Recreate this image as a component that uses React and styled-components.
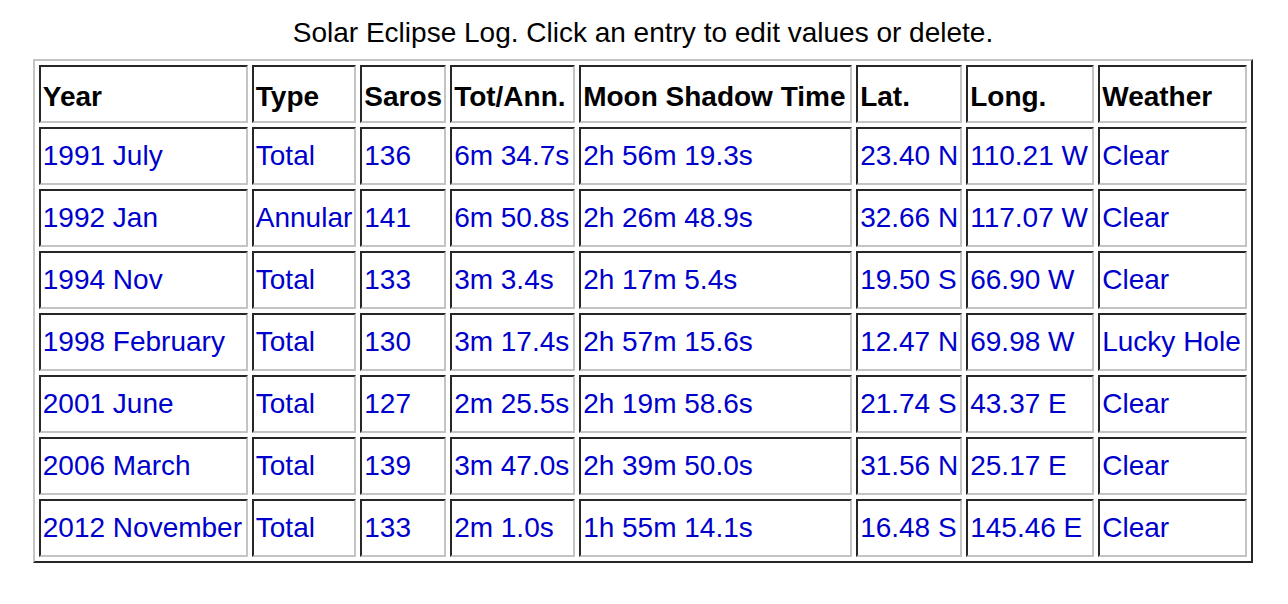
import React from "react";
import styled, { createGlobalStyle } from "styled-components";

const Global = createGlobalStyle`
  html, body { margin: 0; padding: 0; background: #ffffff; }
  body { font-family: "Liberation Sans", Arial, Helvetica, sans-serif; }
`;

const Page = styled.div`
  padding-top: 17px;
  display: flex;
  justify-content: center;
`;

const Table = styled.table`
  border-collapse: separate;
  border-spacing: 4px;
  table-layout: fixed;
  border-style: solid;
  border-width: 2px;
  border-color: #c4c4c4 #262626 #262626 #c4c4c4;
  font-size: 28px;
  line-height: 32px;
  margin-left: -2px;
`;

const Caption = styled.caption`
  font-size: 28px;
  line-height: 32px;
  color: #000;
  padding-bottom: 10px;
  text-align: center;
`;

const Cell = styled.td`
  box-sizing: border-box;
  height: 58px;
  padding: 0 2px;
  vertical-align: middle;
  text-align: left;
  white-space: nowrap;
  overflow: hidden;
  border-style: solid;
  border-width: 2px;
  border-color: #262626 #c4c4c4 #c4c4c4 #262626;
  color: #0000cc;
  cursor: pointer;
`;

const Head = styled(Cell).attrs({ as: "th" })`
  font-weight: bold;
  color: #000;
  cursor: default;
  padding-top: 5px;
  width: ${(p) => p.$w}px;
`;

const cols = [
  ["Year", 209],
  ["Type", 103],
  ["Saros", 85],
  ["Tot/Ann.", 125],
  ["Moon Shadow Time", 273],
  ["Lat.", 106],
  ["Long.", 128],
  ["Weather", 149],
];

const rows = [
  ["1991 July", "Total", "136", "6m 34.7s", "2h 56m 19.3s", "23.40 N", "110.21 W", "Clear"],
  ["1992 Jan", "Annular", "141", "6m 50.8s", "2h 26m 48.9s", "32.66 N", "117.07 W", "Clear"],
  ["1994 Nov", "Total", "133", "3m 3.4s", "2h 17m 5.4s", "19.50 S", "66.90 W", "Clear"],
  ["1998 February", "Total", "130", "3m 17.4s", "2h 57m 15.6s", "12.47 N", "69.98 W", "Lucky Hole"],
  ["2001 June", "Total", "127", "2m 25.5s", "2h 19m 58.6s", "21.74 S", "43.37 E", "Clear"],
  ["2006 March", "Total", "139", "3m 47.0s", "2h 39m 50.0s", "31.56 N", "25.17 E", "Clear"],
  ["2012 November", "Total", "133", "2m 1.0s", "1h 55m 14.1s", "16.48 S", "145.46 E", "Clear"],
];

export default function App() {
  return (
    <>
      <Global />
      <Page>
        <Table>
          <Caption>Solar Eclipse Log. Click an entry to edit values or delete.</Caption>
          <thead>
            <tr>
              {cols.map(([label, w]) => (
                <Head key={label} $w={w}>
                  {label}
                </Head>
              ))}
            </tr>
          </thead>
          <tbody>
            {rows.map((r) => (
              <tr key={r[0]}>
                {r.map((v, i) => (
                  <Cell key={i}>{v}</Cell>
                ))}
              </tr>
            ))}
          </tbody>
        </Table>
      </Page>
    </>
  );
}
